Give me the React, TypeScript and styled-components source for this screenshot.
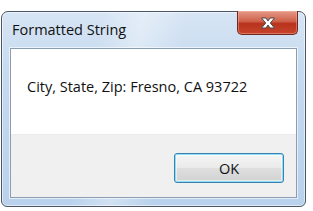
import React from 'react'
import styled, { createGlobalStyle } from 'styled-components'

const GlobalStyle = createGlobalStyle`
  html, body {
    margin: 0;
    padding: 0;
    background: #ffffff;
  }
  body {
    font-family: "Open Sans", "Noto Sans", "DejaVu Sans", sans-serif;
  }
`

const Page = styled.div`
  width: 313px;
  height: 211px;
  padding: 11px 0 0 1px;
  box-sizing: border-box;
`

const Window = styled.div`
  width: 305px;
  height: 196px;
  box-sizing: border-box;
  border: 1px solid #4b5666;
  border-radius: 7px 7px 6px 6px;
  padding: 0 8px 8px 8px;
  display: flex;
  flex-direction: column;
  background:
    linear-gradient(100deg, rgba(255,255,255,0) 30%, rgba(255,255,255,0.35) 42%, rgba(255,255,255,0) 55%),
    linear-gradient(180deg, #d7e5f4 0%, #c6daf0 30%, #b9d1ec 100%);
  box-shadow: inset 0 0 0 1px rgba(255, 255, 255, 0.55);
`

const TitleBar = styled.div`
  height: 36px;
  flex-shrink: 0;
  display: flex;
  align-items: flex-start;
  justify-content: space-between;
`

const Title = styled.div`
  font-size: 14.5px;
  color: #111;
  padding: 9px 0 0 2px;
  line-height: 18px;
`

const CloseBtn = styled.button`
  width: 61px;
  height: 24px;
  margin: -1px -1px 0 0;
  padding: 0;
  border: 1px solid #6e2a22;
  border-top: none;
  border-radius: 0 0 5px 5px;
  background: linear-gradient(180deg, #e39a88 0%, #d0604a 45%, #b8321c 55%, #c7452b 100%);
  box-shadow: inset 0 0 0 1px rgba(255, 190, 180, 0.4);
  display: flex;
  align-items: center;
  justify-content: center;
`

const Client = styled.div`
  flex: 1;
  display: flex;
  flex-direction: column;
  border: 1px solid #8b9db3;
  box-shadow: 0 0 0 1px rgba(255, 255, 255, 0.6);
  background: #f0f0f0;
`

const MessageArea = styled.div`
  height: 85px;
  background: #ffffff;
  box-sizing: border-box;
  padding: 28px 0 0 16px;
  font-size: 14.5px;
  line-height: 20px;
  color: #111;
`

const Footer = styled.div`
  flex: 1;
  display: flex;
  justify-content: flex-end;
  align-items: flex-start;
  padding: 18px 12px 0 0;
  border-top: 1px solid #ececec;
`

const OkButton = styled.button`
  width: 110px;
  height: 30px;
  box-sizing: border-box;
  border: 1px solid #3c7fb1;
  border-radius: 3px;
  background: linear-gradient(180deg, #f5f5f5 0%, #ebebeb 48%, #dedede 52%, #d2d2d2 100%);
  box-shadow: inset 0 0 0 1px #8ce0f6, inset 0 0 0 2px rgba(255,255,255,0.5);
  font-family: "Open Sans", "Noto Sans", sans-serif;
  font-size: 14.5px;
  color: #111;
  padding: 0;
`

const CloseIcon = () => (
  <svg width="16" height="12" viewBox="0 0 16 12">
    <path
      d="M1.5 1 L6 1 L8 4 L10 1 L14.5 1 L10.3 6 L14.5 11 L10 11 L8 8 L6 11 L1.5 11 L5.7 6 Z"
      fill="#ffffff"
      stroke="#4a4a4a"
      strokeWidth="1"
      strokeLinejoin="round"
    />
  </svg>
)

export default function App() {
  return (
    <>
      <GlobalStyle />
      <Page>
        <Window>
          <TitleBar>
            <Title>Formatted String</Title>
            <CloseBtn aria-label="Close">
              <CloseIcon />
            </CloseBtn>
          </TitleBar>
          <Client>
            <MessageArea>City, State, Zip: Fresno, CA 93722</MessageArea>
            <Footer>
              <OkButton>OK</OkButton>
            </Footer>
          </Client>
        </Window>
      </Page>
    </>
  )
}
